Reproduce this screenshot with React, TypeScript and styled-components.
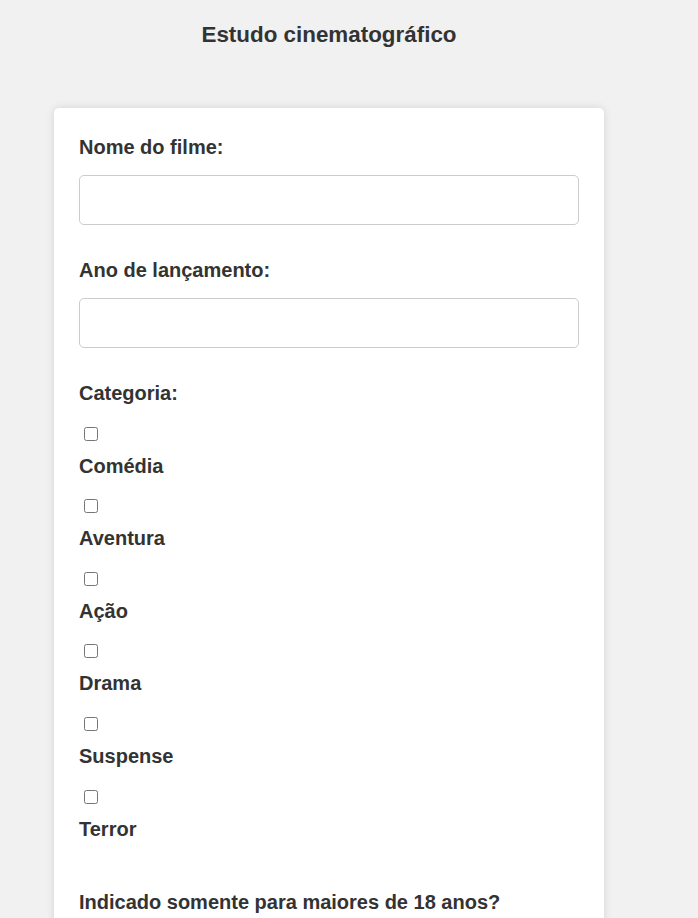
import styled, { createGlobalStyle } from 'styled-components'

const GlobalStyle = createGlobalStyle`
	body {
		margin: 0;
		background-color: #f1f1f1;
		font-family: 'Liberation Sans', Arial, sans-serif;
		color: #333;
	}
`

const categories = ['Comédia', 'Aventura', 'Ação', 'Drama', 'Suspense', 'Terror']

function App() {
	return (
		<>
			<GlobalStyle />
			<S.Page>
				<S.Title>Estudo cinematográfico</S.Title>
				<S.Card>
					<S.Label htmlFor="nome">Nome do filme:</S.Label>
					<S.Input id="nome" type="text" />

					<S.Label htmlFor="ano">Ano de lançamento:</S.Label>
					<S.Input id="ano" type="text" />

					<S.GroupTitle>Categoria:</S.GroupTitle>
					<S.OptionList>
						{categories.map((cat, i) => (
							<S.Option key={cat}>
								<S.Check id={`cat-${i}`} type="checkbox" />
								<S.OptionLabel htmlFor={`cat-${i}`}>{cat}</S.OptionLabel>
							</S.Option>
						))}
					</S.OptionList>

					<S.Question>Indicado somente para maiores de 18 anos?</S.Question>
				</S.Card>
			</S.Page>
		</>
	)
}
export default App

const Page = styled.div`
	width: 550px;
	margin-left: 54px;
	padding-top: 22px;
`
const Title = styled.h1`
	margin: 0 0 60px;
	font-size: 22.4px;
	font-weight: bold;
	text-align: center;
	color: #333;
`
const Card = styled.div`
	background-color: #fff;
	border-radius: 5px;
	box-shadow: 0 0 8px rgba(0, 0, 0, 0.12);
	padding: 28px 25px 120px;
`
const Label = styled.label`
	display: block;
	font-size: 20px;
	font-weight: bold;
	margin-bottom: 16px;
`
const GroupTitle = styled.div`
	font-size: 20px;
	font-weight: bold;
`
const Input = styled.input`
	display: block;
	box-sizing: border-box;
	width: 100%;
	height: 50px;
	margin: 0 0 34px;
	padding: 10px;
	border: 1px solid #ccc;
	border-radius: 5px;
	font-size: 16px;
	background: #fff;
`
const OptionList = styled.div`
	display: flex;
	flex-direction: column;
`
const Option = styled.div`
	display: flex;
	flex-direction: column;
	align-items: flex-start;
	padding-top: 21.6px;
`
const Check = styled.input`
	width: 14px;
	height: 14px;
	margin: 0 0 14px 5px;
`
const OptionLabel = styled.label`
	font-size: 20px;
	font-weight: bold;
`
const Question = styled.p`
	margin: 50px 0 0;
	font-size: 20px;
	font-weight: bold;
`

const S = {
	Page,
	Title,
	Card,
	Label,
	GroupTitle,
	Input,
	OptionList,
	Option,
	Check,
	OptionLabel,
	Question,
}
